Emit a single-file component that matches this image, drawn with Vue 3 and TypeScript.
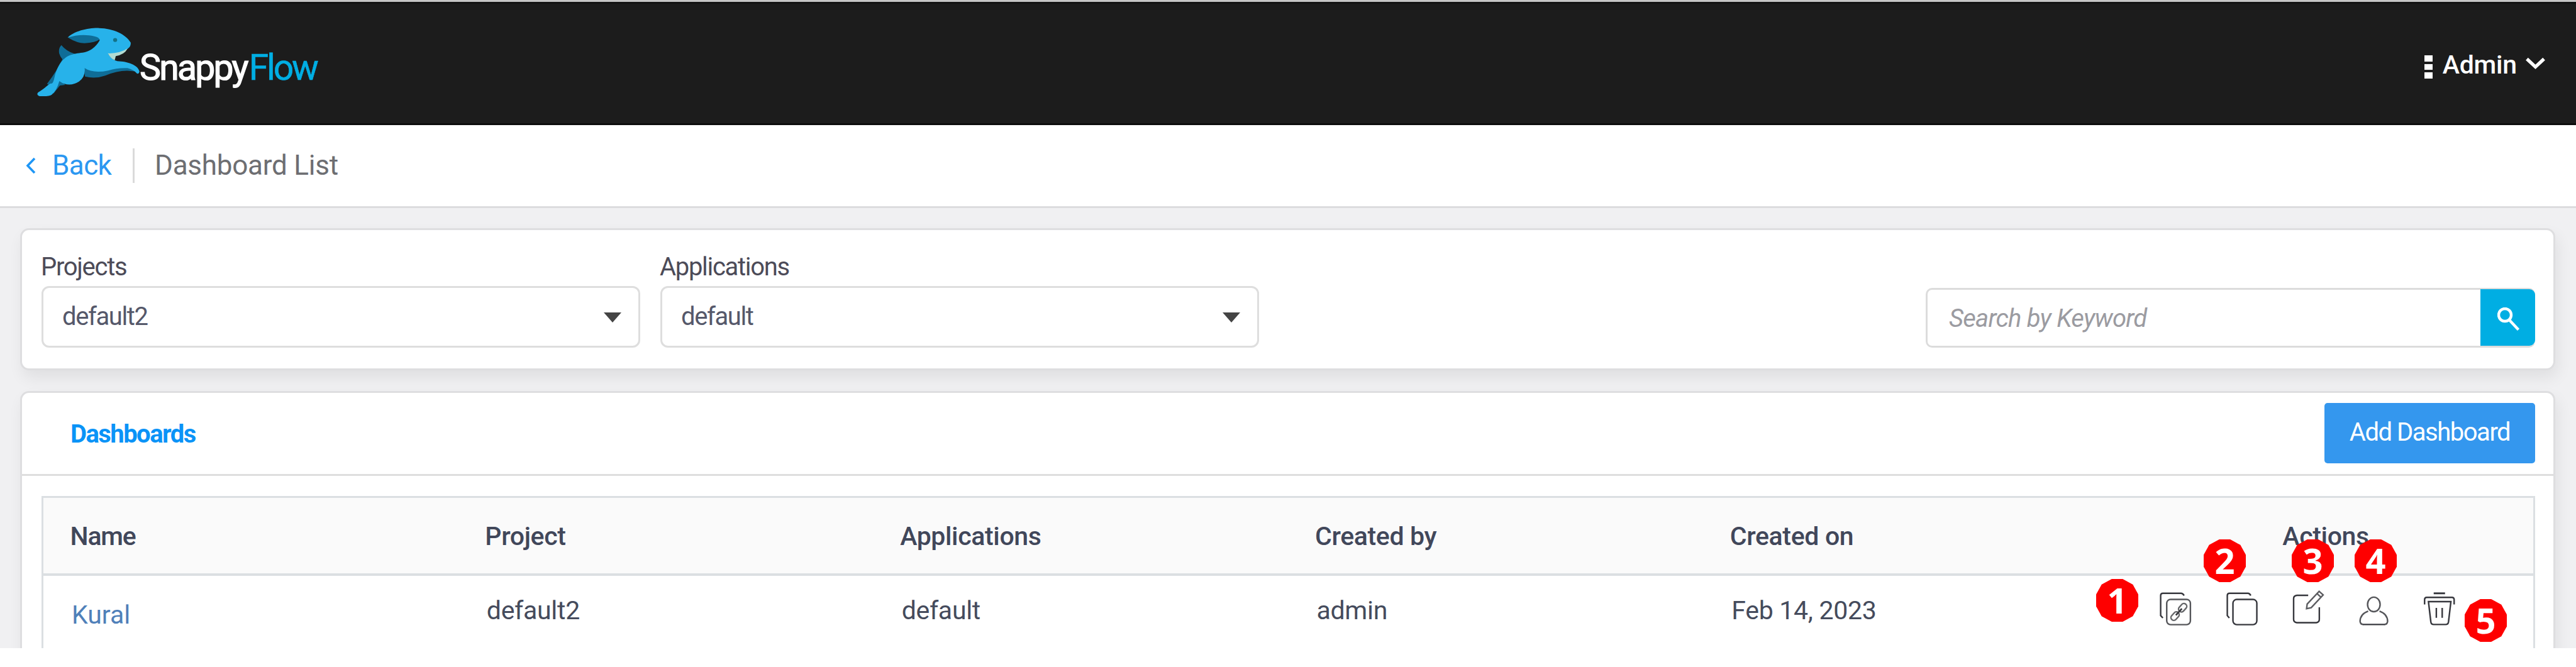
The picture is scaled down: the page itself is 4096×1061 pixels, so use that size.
<script setup lang="ts">
interface Dashboard {
  name: string
  project: string
  application: string
  createdBy: string
  createdOn: string
}

interface Marker {
  label: number
  x: number
  y: number
}

const columns: string[] = ['Name', 'Project', 'Applications', 'Created by', 'Created on']

const dashboards: Dashboard[] = [
  { name: 'Kural', project: 'default2', application: 'default', createdBy: 'admin', createdOn: 'Feb 14, 2023' },
]

const markers: Marker[] = [
  { label: 1, x: 3333, y: 921 },
  { label: 2, x: 3504, y: 858 },
  { label: 3, x: 3644, y: 858 },
  { label: 4, x: 3744, y: 858 },
  { label: 5, x: 3919, y: 953 },
]
</script>

<template>
  <div class="page">
    <header class="topbar">
      <div class="brand">
        <svg class="rabbit" viewBox="30 45 510 345">
          <g fill="#0f6d97">
            <path d="M153 134 Q138 150 142 175 Q147 192 160 207 L220 178 Q178 165 153 134Z" />
            <path d="M163 196 Q130 265 82 326 L110 340 L205 205Z" />
            <path d="M187 98 Q230 125 268 125 Q320 123 345 105 L330 84 L230 78Z" />
            <path d="M264 240 L270 290 Q320 303 370 285 Q430 260 480 261 L515 264 L500 238Z" />
            <path d="M112 376 L146 334 L172 331 L140 300Z" />
          </g>
          <path
            fill="#27b2ea"
            d="M184 98 C215 64 290 48 340 50 C410 52 472 80 496 122 C497 138 490 146 480 153 Q445 182 385 178 Q402 206 430 214 C482 216 530 232 539 264 Q538 276 528 276 Q510 255 480 248 Q430 246 385 260 Q310 276 268 248 Q274 290 240 315 Q190 346 143 312 Q130 360 105 380 Q95 389 45 387 Q28 380 38 368 C74 348 90 325 102 324 Q112 330 120 290 C132 240 160 190 210 180 C250 168 300 182 342 112 Q346 92 290 86 Q235 80 184 98Z"
          />
          <path fill="#b3dcd2" d="M383 175 Q440 177 481 151 Q465 182 422 189 L417 209 Q398 203 383 175Z" />
          <circle cx="419" cy="109" r="10" fill="#147287" />
        </svg>
        <span class="brand-name">Snappy</span><span class="brand-name flow">Flow</span>
      </div>
      <div class="account">
        <span class="dots"><i></i><i></i><i></i></span>
        <span class="account-name">Admin</span>
        <svg class="down" viewBox="0 0 32 20"><path d="M2 2.5 L16 15.5 L30 2.5" /></svg>
      </div>
    </header>

    <nav class="crumbs">
      <svg class="left" viewBox="0 0 16 27"><path d="M14 2 L3 13.5 L14 25" /></svg>
      <a class="back">Back</a>
      <span class="rule"></span>
      <span class="crumb">Dashboard List</span>
    </nav>

    <main class="body">
      <section class="card filters">
        <div class="field">
          <label>Projects</label>
          <div class="select"><span>default2</span><i class="caret"></i></div>
        </div>
        <div class="field">
          <label>Applications</label>
          <div class="select"><span>default</span><i class="caret"></i></div>
        </div>
        <div class="search">
          <span class="placeholder">Search by Keyword</span>
          <button class="go">
            <svg viewBox="0 0 36 38"><circle cx="12" cy="12" r="10" /><path d="M18.5 19.5 L33.5 35.5" /></svg>
          </button>
        </div>
      </section>

      <section class="card list">
        <div class="list-head">
          <span class="tab">Dashboards</span>
          <button class="add">Add Dashboard</button>
        </div>
        <div class="table">
          <div class="row head">
            <span v-for="c in columns" :key="c" class="cell">{{ c }}</span>
            <span class="cell center">Actions</span>
          </div>
          <div v-for="d in dashboards" :key="d.name" class="row item">
            <a class="cell link">{{ d.name }}</a>
            <span class="cell">{{ d.project }}</span>
            <span class="cell">{{ d.application }}</span>
            <span class="cell">{{ d.createdBy }}</span>
            <span class="cell">{{ d.createdOn }}</span>
            <span class="cell actions">
              <svg viewBox="402 300 165 185">
                <path d="M421 443 L410 431 V332 Q410 321 421 321 H511 Q519 321 526 332" />
                <rect x="440" y="351" width="117" height="125" rx="19" stroke="#55565a" />
                <g transform="translate(500 413) rotate(-48)" stroke="#66676a">
                  <rect x="-51" y="-14" width="46" height="28" rx="13" />
                  <rect x="5" y="-14" width="46" height="28" rx="13" />
                  <path d="M-22 0 H22" stroke="#3a3b40" stroke-width="9" />
                </g>
              </svg>
              <svg viewBox="728 300 165 185">
                <path d="M749 443 L739 431 V332 Q739 321 750 321 H841 Q849 321 855 332" />
                <rect x="767" y="351" width="118" height="125" rx="19" />
              </svg>
              <svg viewBox="33.6 300 165 185">
                <path d="M118 331 H62 Q46 333 46 347 V450 Q46 464 62 466 H158 Q173 464 173 450 V390" />
                <path stroke="#5c5d61" d="M110 397 L113 374 L172 311 L192 329 L133 392 Z M161 322 L181 340" />
              </svg>
              <svg viewBox="359.5 300 165 185">
                <ellipse cx="442" cy="376" rx="31" ry="36" stroke="#55565a" />
                <path stroke="#55565a" d="M414 409 Q374 424 374 460 Q376 475 390 475" />
                <path stroke="#55565a" d="M470 409 Q510 424 510 460 Q508 475 494 475" />
                <path d="M388 475 H496" />
              </svg>
              <svg viewBox="685 300 165 185">
                <path d="M737 321 H793" stroke-width="9" />
                <path d="M692 376 V352 Q692 341 703 341 H827 Q838 341 838 352 V376" />
                <path d="M711 362 H822 L810 463 Q808 475 796 475 H737 Q725 475 723 463 Z M750 393 V442 M779 393 V442" />
              </svg>
            </span>
          </div>
        </div>
      </section>
    </main>

    <span
      v-for="m in markers"
      :key="m.label"
      class="marker"
      :style="{ left: m.x + 'px', top: m.y + 'px' }"
    >{{ m.label }}</span>
  </div>
</template>

<style>
body {
  margin: 0;
  background: #fff;
}
</style>

<style scoped>
* {
  box-sizing: border-box;
}
.page {
  position: relative;
  width: 4096px;
  height: 1061px;
  overflow: hidden;
  background: #fff;
  font-family: Roboto, 'Liberation Sans', sans-serif;
  font-size: 41px;
  line-height: 48px;
  color: #454b5c;
  white-space: nowrap;
}
svg {
  display: block;
  flex: none;
  fill: none;
}
button {
  border: 0;
  padding: 0;
  font: inherit;
}
.topbar {
  height: 199px;
  border-top: 3px solid #c6c6c6;
  background: #1c1c1c;
  box-shadow: inset 0 3px #131313, inset 0 -3px #0d0d0d;
  display: flex;
  justify-content: space-between;
  padding: 0 49px 0 58px;
}
.brand {
  display: flex;
  align-items: flex-start;
  padding-top: 40px;
}
.rabbit {
  width: 164px;
  height: 111px;
}
.brand-name {
  margin-top: 31px;
  font-size: 57px;
  line-height: 68px;
  letter-spacing: -2.7px;
  color: #fff;
  -webkit-text-stroke: 1.2px #fff;
}
.brand-name.flow {
  margin-left: 3px;
  color: #00aee3;
  letter-spacing: -3.2px;
  -webkit-text-stroke: 0.6px #00aee3;
}
.account {
  display: flex;
  align-items: flex-start;
  padding-top: 76px;
  color: #fff;
}
.dots {
  display: flex;
  flex-direction: column;
  gap: 4px;
  margin: 9px 16px 0 0;
}
.dots i {
  width: 13px;
  height: 9.5px;
  background: #fff;
}
.account-name {
  font-weight: 500;
  letter-spacing: -0.2px;
}
.down {
  width: 31px;
  height: 20px;
  margin: 12px 0 0 14px;
  stroke: #fff;
  stroke-width: 5.5;
}
.crumbs {
  height: 131.5px;
  border-bottom: 3px solid #dcdcde;
  display: flex;
  align-items: center;
  padding-left: 41px;
  font-size: 44px;
  color: #6d6e72;
}
.left {
  width: 16px;
  height: 27px;
  stroke: #1e96f5;
  stroke-width: 3.6;
}
.back {
  margin-left: 26px;
  width: 128px;
  letter-spacing: -0.6px;
  color: #2b97f1;
}
.rule {
  width: 3px;
  height: 55px;
  background: #dadada;
}
.crumb {
  margin-left: 32px;
  letter-spacing: -0.24px;
}
.body {
  height: 700px;
  overflow: hidden;
  background: #f0f0f2;
  padding: 32px 33px 0 32px;
}
.card {
  background: #fff;
  border: 3px solid #dedee0;
  border-radius: 14px;
  box-shadow: 4px 12px 24px rgba(0, 0, 0, 0.07);
}
.filters {
  height: 226px;
  padding: 35px 29px 0 31px;
  display: flex;
}
.field {
  width: 952px;
  margin-right: 32px;
}
.field label {
  display: block;
  height: 54px;
  font-size: 40px;
  letter-spacing: -1.3px;
  color: #4c4b58;
  text-indent: -1px;
}
.select {
  height: 98px;
  border: 3px solid #dedede;
  border-radius: 12px;
  display: flex;
  align-items: center;
  justify-content: space-between;
  padding: 0 27px 0 30px;
  font-size: 40px;
  letter-spacing: -1.4px;
  color: #55586a;
}
.caret {
  border: 14px solid transparent;
  border-top: 16px solid #444;
  border-bottom: 0;
  margin-top: 2px;
}
.search {
  margin: 57px 0 0 auto;
  width: 969px;
  height: 95px;
  border: 3px solid #dcdcdc;
  border-right: 0;
  border-radius: 10px;
  display: flex;
  align-items: center;
  justify-content: space-between;
}
.placeholder {
  padding: 3px 0 0 34px;
  font-size: 40px;
  font-style: italic;
  letter-spacing: -0.75px;
  color: #9b9ba1;
}
.go {
  width: 87px;
  height: 90px;
  border-radius: 0 9px 9px 0;
  background: #00aee3;
  padding: 6px 0 0 27px;
}
.go svg {
  width: 36px;
  height: 38px;
  stroke: #fff;
  stroke-width: 4.4;
}
.list {
  margin-top: 33px;
  height: 460px;
}
.list-head {
  height: 132px;
  border-bottom: 3px solid #dedede;
  display: flex;
  justify-content: space-between;
  align-items: center;
  padding: 0 29px 0 77px;
}
.tab {
  padding-top: 3px;
  font-size: 40px;
  font-weight: 700;
  letter-spacing: -1.55px;
  color: #0a93f7;
}
.add {
  width: 335px;
  height: 96px;
  border-radius: 5px;
  background: #3497ee;
  color: #fff;
  font-size: 40px;
  line-height: 48px;
  letter-spacing: -1.48px;
  padding-bottom: 3px;
}
.table {
  margin: 32px 29px 0 31px;
  height: 400px;
  border: 3px solid #dbdfe2;
}
.row {
  display: grid;
  grid-template-columns: repeat(6, 1fr);
}
.head {
  height: 124px;
  align-items: center;
  background: #fafafa;
  border-bottom: 4px solid #dbdfe2;
  font-weight: 500;
  letter-spacing: -0.35px;
  color: #41475a;
}
.cell {
  padding: 2px 0 0 42.5px;
}
.head .cell:first-child {
  letter-spacing: -1.2px;
}
.cell.center {
  padding-left: 0;
  text-align: center;
}
.item {
  padding-top: 31px;
}
.item .cell {
  padding-top: 0;
  padding-left: 45px;
  letter-spacing: -0.3px;
}
.item .link {
  padding-top: 7px;
  letter-spacing: 0;
  color: #4f80b9;
}
.item .actions {
  display: flex;
  gap: 51.8px;
  padding-left: 65px;
  margin-top: -10px;
}
.actions svg {
  width: 53.1px;
  height: 59.6px;
  stroke: #36373d;
  stroke-width: 7.5;
}
.marker {
  position: absolute;
  width: 67px;
  height: 68px;
  background: #fe0000;
  clip-path: polygon(37% 0, 63% 0, 87% 13%, 100% 36%, 100% 64%, 87% 87%, 63% 100%, 37% 100%, 13% 87%, 0 64%, 0 36%, 13% 13%);
  color: #fff;
  font: 700 56px/66px 'Noto Sans', 'Open Sans', sans-serif;
  text-align: center;
}
</style>
